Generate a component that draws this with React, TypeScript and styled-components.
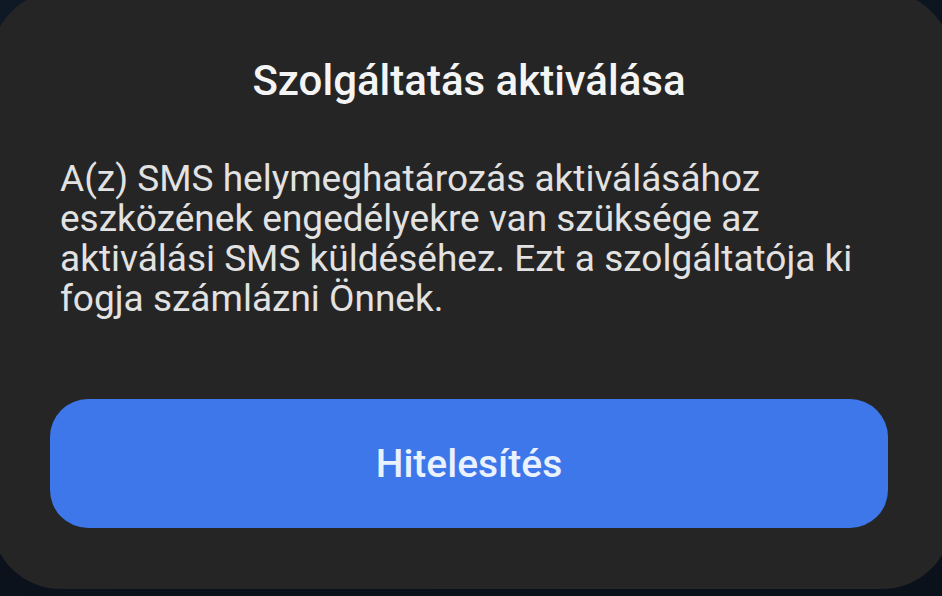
import React from "react";
import styled, { createGlobalStyle } from "styled-components";

const GlobalStyle = createGlobalStyle`
  html, body { margin: 0; padding: 0; background: #0d1520; }
  body { font-family: Roboto, "Noto Sans", "Liberation Sans", sans-serif; }
`;

const Page = styled.div`
  width: 942px;
  height: 596px;
  overflow: hidden;
  background: linear-gradient(160deg, #0f1926 0%, #0b121c 60%, #0a111a 100%);
  display: flex;
  flex-direction: column;
`;

const Dialog = styled.section`
  margin: -9px -10px 0 -9px;
  height: 598px;
  box-sizing: border-box;
  background: #252525;
  border-radius: 70px;
  padding: 63px 74px 0 69px;
  display: flex;
  flex-direction: column;
`;

const Title = styled.h1`
  margin: 0;
  font-size: 42px;
  line-height: 54px;
  font-weight: 500;
  color: #f4f4f4;
  text-align: center;
`;

const Body = styled.p`
  margin: 51px 0 0;
  font-size: 37px;
  line-height: 40px;
  font-weight: 400;
  color: #e2e2e2;
  white-space: nowrap;
`;

const Action = styled.button`
  margin: 80px 0 0 -10px;
  width: 838px;
  height: 129px;
  border: none;
  border-radius: 38px;
  background: #3d77e9;
  color: #eaf1ff;
  font-family: inherit;
  font-size: 39px;
  font-weight: 500;
  cursor: pointer;
`;

export default function App() {
  return (
    <>
      <GlobalStyle />
      <Page>
        <Dialog>
          <Title>Szolgáltatás aktiválása</Title>
          <Body>
            A(z) SMS helymeghatározás aktiválásához
            <br />
            eszközének engedélyekre van szüksége az
            <br />
            aktiválási SMS küldéséhez. Ezt a szolgáltatója ki
            <br />
            fogja számlázni Önnek.
          </Body>
          <Action>Hitelesítés</Action>
        </Dialog>
      </Page>
    </>
  );
}
